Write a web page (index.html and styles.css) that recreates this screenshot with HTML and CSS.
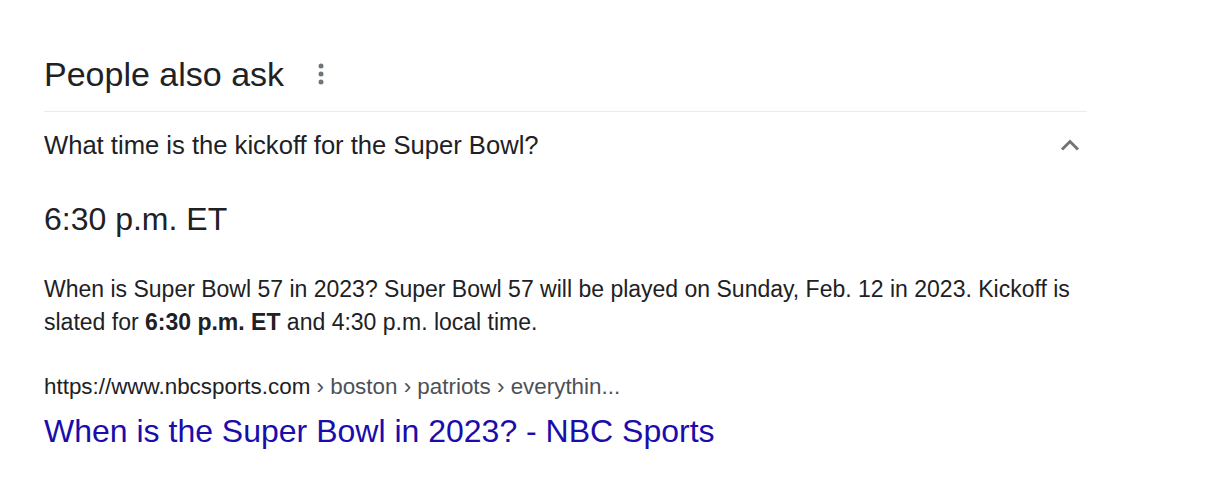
FILE: index.html
```html
<!DOCTYPE html>
<html lang="en">
<head>
<meta charset="utf-8">
<title>People also ask</title>
<link rel="stylesheet" href="styles.css">
</head>
<body>
<div class="paa">
  <div class="paa-head">
    <h2 class="paa-title">People also ask</h2>
    <svg class="dots" width="6" height="22" viewBox="0 0 6 22" aria-hidden="true">
      <circle cx="3" cy="3" r="2.5" fill="#70757a"/>
      <circle cx="3" cy="11" r="2.5" fill="#70757a"/>
      <circle cx="3" cy="19" r="2.5" fill="#70757a"/>
    </svg>
  </div>
  <div class="question">
    <span class="q-text">What time is the kickoff for the Super Bowl?</span>
    <svg class="chevron" width="20" height="12" viewBox="0 0 20 12" aria-hidden="true">
      <path d="M2 10.5 L10 2.5 L18 10.5" fill="none" stroke="#70757a" stroke-width="3"/>
    </svg>
  </div>
  <div class="answer">6:30 p.m. ET</div>
  <p class="snippet">When is Super Bowl 57 in 2023? Super Bowl 57 will be played on Sunday, Feb. 12 in 2023. Kickoff is slated for <b>6:30 p.m. ET</b> and 4:30 p.m. local time.</p>
  <div class="cite"><span class="domain">https://www.nbcsports.com</span> › boston › patriots › everythin...</div>
  <a class="result-title" href="#">When is the Super Bowl in 2023? - NBC Sports</a>
</div>
</body>
</html>
```
FILE: styles.css
```css
html, body {
  margin: 0;
  padding: 0;
  background: #fff;
}
body {
  font-family: "Liberation Sans", Arial, sans-serif;
  color: #202124;
}
.paa {
  width: 1043px;
  margin-left: 44px;
  padding-top: 53px;
}
.paa-head {
  display: flex;
  align-items: center;
  height: 42px;
  padding-bottom: 16px;
  border-bottom: 1px solid #ebebeb;
}
.paa-title {
  margin: 0;
  font-size: 34px;
  font-weight: normal;
  line-height: 42px;
  color: #202124;
}
.dots {
  margin-left: 34px;
}
.question {
  display: flex;
  align-items: center;
  justify-content: space-between;
  height: 66px;
}
.q-text {
  font-size: 25.6px;
  line-height: 32px;
  color: #202124;
}
.chevron {
  margin-right: 7px;
}
.answer {
  margin-top: 21px;
  font-size: 32px;
  line-height: 40px;
  color: #202124;
}
.snippet {
  margin: 34px 0 0;
  font-size: 23px;
  line-height: 33px;
  color: #202124;
}
.snippet b {
  font-weight: bold;
}
.cite {
  margin-top: 33px;
  font-size: 22.4px;
  line-height: 30px;
  color: #4d5156;
}
.domain {
  color: #202124;
}
.result-title {
  display: block;
  margin-top: 9px;
  font-size: 32px;
  line-height: 40px;
  color: #1a0dab;
  text-decoration: none;
}
```
